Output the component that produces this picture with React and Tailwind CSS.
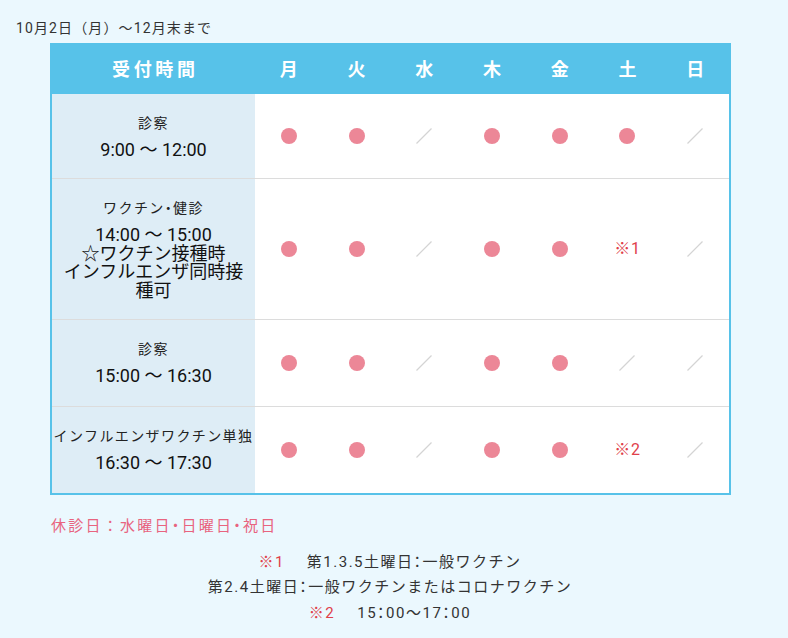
const DAYS = ['月', '火', '水', '木', '金', '土', '日'];

const ROWS = [
  { label: '診察', time: ['9:00 〜 12:00'], cells: ['o', 'o', '/', 'o', 'o', 'o', '/'], pb: 'pb-[18.5px]' },
  {
    label: 'ワクチン・健診',
    time: ['14:00 〜 15:00', '☆ワクチン接種時', 'インフルエンザ同時接', '種可'],
    cells: ['o', 'o', '/', 'o', 'o', '※1', '/'],
    pb: 'pb-[18.5px]',
  },
  { label: '診察', time: ['15:00 〜 16:30'], cells: ['o', 'o', '/', 'o', 'o', '/', '/'], pb: 'pb-[20.5px]' },
  {
    label: 'インフルエンザワクチン単独',
    time: ['16:30 〜 17:30'],
    cells: ['o', 'o', '/', 'o', 'o', '※2', '/'],
    pb: 'pb-[20.5px]',
  },
];

// full-width ・ and ： set proportional, as on the original page
function Jp({ children, keepColon }) {
  const parts = children.split(/([・：])/);
  return parts.map((p, i) =>
    p === '・' || (p === '：' && !keepColon) ? (
      <span key={i} className="[font-feature-settings:'palt']">{p}</span>
    ) : (
      p
    )
  );
}

function Mark({ v }) {
  if (v === 'o') return <span className="block w-4 h-4 rounded-full bg-[#ec8797]" />;
  if (v === '/')
    return (
      <svg width="16" height="16" viewBox="0 0 16 16">
        <line x1="0.5" y1="15.5" x2="15.5" y2="0.5" stroke="#d4d4d4" strokeWidth="1.2" />
      </svg>
    );
  return <span className="text-[16px] text-[#e0404a] tracking-[0.05em]">{v}</span>;
}

export default function App() {
  return (
    <div className="min-h-[638px] bg-[#ebf8fe] font-[Roboto,'Noto_Sans_CJK_JP',sans-serif] text-[#333] pl-4 pt-[18px]">
      <p className="text-[14px] leading-[20px] tracking-[0.08em] text-[#333]">10月2日（月）〜12月末まで</p>

      <div className="ml-[34px] mt-[5px] w-[681px] border-2 border-[#57c2e9] bg-white">
        <div className="grid grid-cols-[203px_repeat(7,1fr)] h-[49px] bg-[#57c2e9] text-white font-bold text-[18px]">
          <div className="flex items-center justify-center tracking-[0.2em] pl-[0.2em]">受付時間</div>
          {DAYS.map((d) => (
            <div key={d} className="flex items-center justify-center">{d}</div>
          ))}
        </div>

        {ROWS.map((r, i) => (
          <div
            key={i}
            className={`grid grid-cols-[203px_repeat(7,1fr)] ${i < ROWS.length - 1 ? 'border-b border-[#dcdcdc]' : ''}`}
          >
            <div className={`bg-[#deedf6] text-center pt-[19px] ${r.pb}`}>
              <div className="text-[14px] leading-[20px] tracking-[0.1em] text-[#222]">
                <Jp>{r.label}</Jp>
              </div>
              <div className="mt-[8px] text-[18px] leading-[18.5px] text-[#111]">
                {r.time.map((t, j) => (
                  <div key={j}>{t}</div>
                ))}
              </div>
            </div>
            {r.cells.map((c, j) => (
              <div key={j} className="flex items-center justify-center">
                <Mark v={c} />
              </div>
            ))}
          </div>
        ))}
      </div>

      <p className="ml-[35px] mt-[20px] text-[15px] leading-[22px] tracking-[0.15em] text-[#e8647f]">
        <Jp keepColon>休診日：水曜日・日曜日・祝日</Jp>
      </p>

      <div className="w-[748px] mt-[13px] text-center text-[15px] leading-[25.5px] tracking-[0.1em] text-[#333]">
        <div>
          <span className="text-[#e0404a] mr-[22px]">※1</span>
          <Jp>第1.3.5土曜日：一般ワクチン</Jp>
        </div>
        <div>
          <Jp>第2.4土曜日：一般ワクチンまたはコロナワクチン</Jp>
        </div>
        <div>
          <span className="text-[#e0404a] mr-[22px]">※2</span>
          <Jp>15：00〜17：00</Jp>
        </div>
      </div>
    </div>
  );
}
